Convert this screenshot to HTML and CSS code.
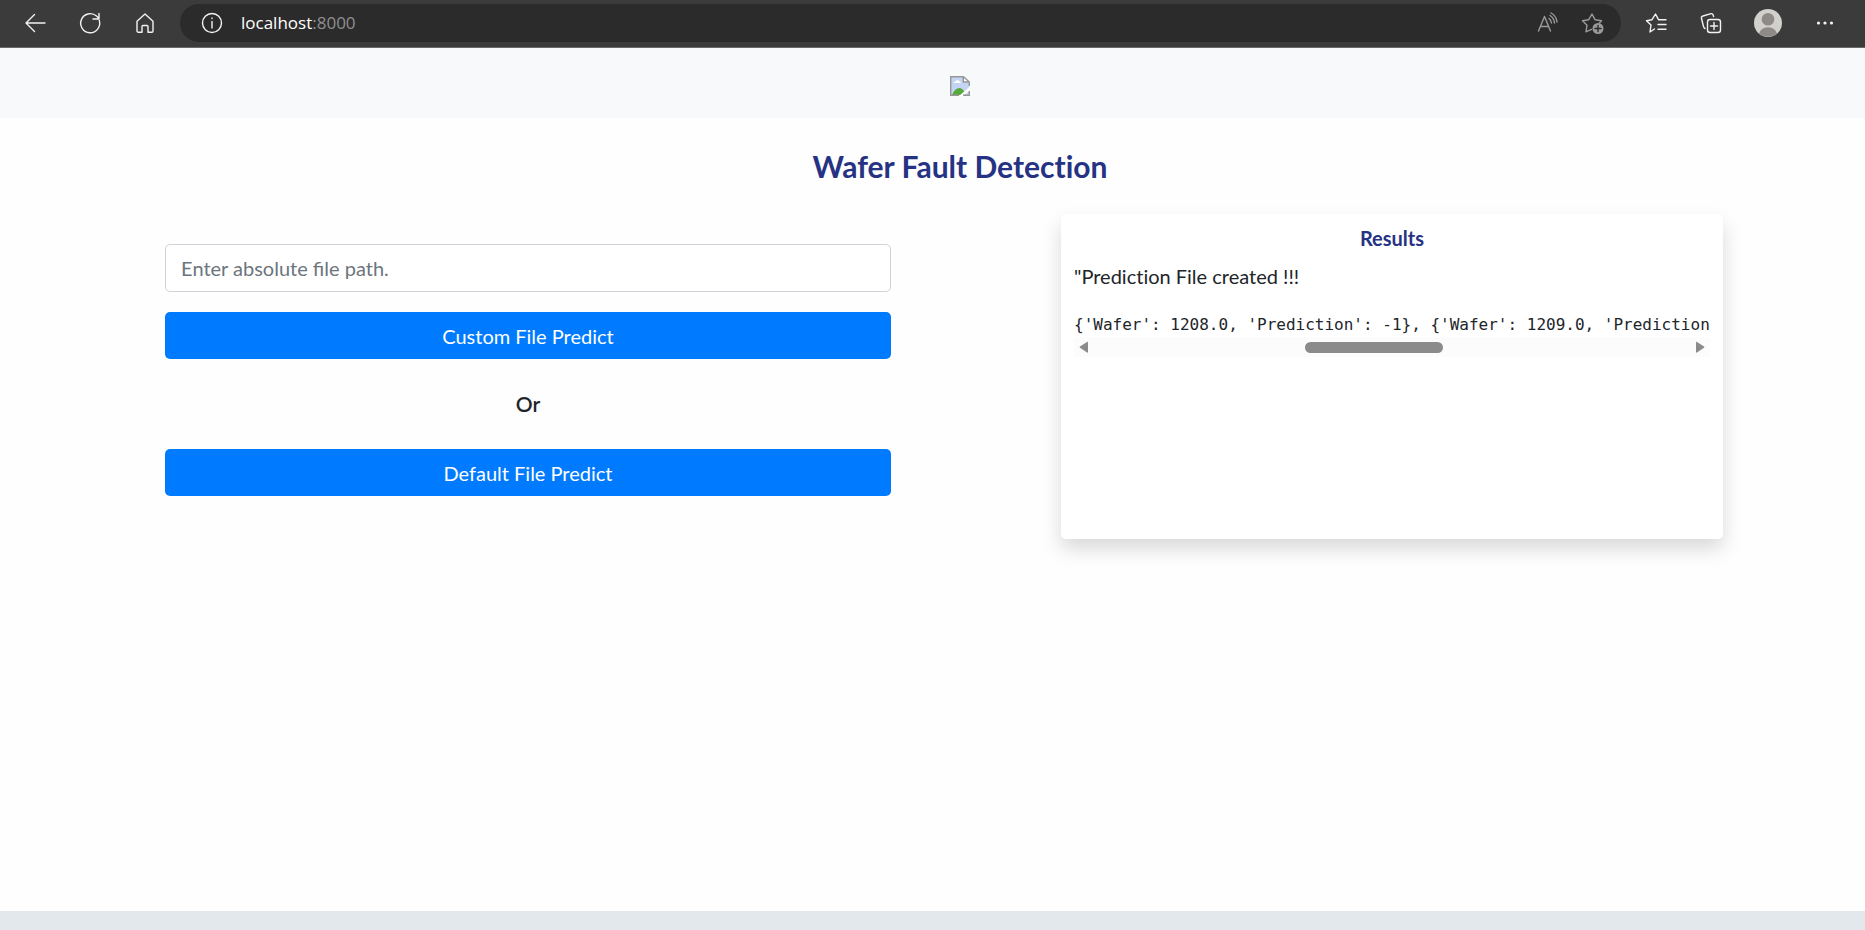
FILE: index.html
```html
<!DOCTYPE html>
<html lang="en">
<head>
<meta charset="utf-8">
<title>Wafer Fault Detection</title>
<link rel="stylesheet" href="styles.css">
</head>
<body>
<header class="browser">
  <button class="tool" aria-label="Back"><svg width="24" height="24" viewBox="0 0 24 24"><path d="M22 12H3M11.500 3.500L3 12l8.500 8.500"/></svg></button>
  <button class="tool" aria-label="Refresh"><svg width="24" height="24" viewBox="0 0 24 24"><path d="M21.300 9.500A9.500 9.500 0 1 1 18.500 5.100L21 7.500M21 2.500v5.500h-6"/></svg></button>
  <button class="tool" aria-label="Home"><svg width="24" height="24" viewBox="0 0 24 24"><path d="M4 10.200L12 3l8 7.200V20a1.200 1.200 0 0 1-1.200 1.200H15V15.500a1 1 0 0 0-1-1h-4a1 1 0 0 0-1 1v5.700H5.200A1.200 1.200 0 0 1 4 20z"/></svg></button>
  <div class="address">
    <svg width="24" height="24" viewBox="0 0 24 24"><circle cx="12" cy="12" r="9.500"/><path d="M12 10.500v6.500M12 7v.500"/></svg>
    <span class="url">localhost<span class="port">:8000</span></span>
    <button class="tool dim" aria-label="Read aloud"><svg width="24" height="24" viewBox="0 0 24 24"><path d="M2.500 20L8.500 5.500l6 14.500M4.700 15.500h7.800M13 7.500q2 1.500 2.500 4.500M14 4.500q4 2.500 4.500 7.500M15 2q5.500 3 6 9"/></svg></button>
    <button class="tool dim" aria-label="Add to favorites"><svg width="24" height="24" viewBox="0 0 24 24"><path d="M10.500 18.300l-5.500 2.500 1-6.600L1.500 9.700l6.200-1L11 3l3 5.700 6.500 1-2 2.300"/><circle class="disc" cx="17" cy="17.500" r="5.500"/><path class="cross" d="M17 14.500v6M14 17.500h6"/></svg></button>
  </div>
  <button class="tool" aria-label="Favorites"><svg width="24" height="24" viewBox="0 0 24 24"><path d="M10.500 18L6 21l1-7-4.500-4.300 5.500-1L11.500 3l3 5.700H22M14 13.500h8M14 18.300h8"/></svg></button>
  <button class="tool" aria-label="Collections"><svg width="24" height="24" viewBox="0 0 24 24"><rect x="8.500" y="8.500" width="13" height="13" rx="2.500"/><path d="M15 11.500v7M11.500 15h7M6 17.500q-1-.5-1.500-2L2.500 7.500Q2 5.500 4 5l8-2.300q1.500-.4 2 1l.6 1.800"/></svg></button>
  <button class="tool" aria-label="Profile"><svg class="avatar" width="28" height="28" viewBox="0 0 28 28"><circle cx="14" cy="14" r="14" fill="#d2d0cd"/><circle cx="14" cy="10.300" r="6.300" fill="#8e8a87"/><path d="M5 24.500a9.600 9.600 0 0 1 18 0a14 14 0 0 1-18 0z" fill="#8e8a87"/></svg></button>
  <button class="tool" aria-label="Settings and more"><svg class="dots" width="24" height="24" viewBox="0 0 24 24"><circle cx="5.500" cy="12" r="1.600"/><circle cx="12" cy="12" r="1.600"/><circle cx="18.500" cy="12" r="1.600"/></svg></button>
</header>
<nav class="navbar">
  <svg width="20" height="20" viewBox="0 0 20 20" role="img" aria-label="Logo">
    <path d="M1 1h12.500L19 6v13H1z" fill="#c3d4f4"/>
    <path d="M4 7q0-2 2-1.800Q7.500 3 9 5q2 .3 2 2z" fill="#fff"/>
    <path d="M2 19q3-7 7.500-7 4 0 6 7z" fill="#57aa3a"/>
    <path d="M9 20L20 10.500v4L13 20z" fill="#fff"/>
    <path d="M13.500.5L19.500 6h-6z" fill="#fff"/>
    <path d="M19.300 10V6L13.500.700H.700v18.600H9M13.300.700V6h6M13 19.300h6.300V15" fill="none" stroke="#979797" stroke-width="1.400"/>
  </svg>
</nav>
<main class="page">
  <h1 class="title">Wafer Fault Detection</h1>
  <div class="columns">
    <form class="predict">
      <input class="path" type="text" aria-label="File path" placeholder="Enter absolute file path.">
      <button class="btn" type="button">Custom File Predict</button>
      <p class="or">Or</p>
      <button class="btn" type="button">Default File Predict</button>
    </form>
    <section class="card">
      <h2 class="card-title">Results</h2>
      <p class="message">"Prediction File created !!!</p>
      <pre class="output">{'Wafer': 1208.0, 'Prediction': -1}, {'Wafer': 1209.0, 'Prediction</pre>
      <div class="scrollbar">
        <svg width="20" height="20" viewBox="0 0 20 20"><path d="M14 5.500v9.500q0 1-1 .500L6 10.800q-1-.6 0-1.200L13 5q1-.500 1 .500z"/></svg>
        <div class="track"><div class="thumb"></div></div>
        <svg width="20" height="20" viewBox="0 0 20 20"><path d="M6 5.500v9.500q0 1 1 .500l7-4.700q1-.6 0-1.200L7 5q-1-.500-1 .500z"/></svg>
      </div>
    </section>
  </div>
</main>
<footer class="footer"></footer>
</body>
</html>
```
FILE: styles.css
```css
* { box-sizing: border-box; }
body {
  margin: 0;
  min-height: 100vh;
  display: flex;
  flex-direction: column;
  background: #fefefe;
  color: #212529;
  font: 20px/30px Lato, sans-serif;
}
h1, h2, p, pre { margin: 0; }
button, input { font: inherit; }

.browser {
  display: flex;
  align-items: center;
  gap: 31px;
  height: 48px;
  padding: 0 28px 2px 23px;
  background: #3b3b3b;
  border-bottom: 1px solid #6b6a6a;
}
.tool {
  display: flex;
  padding: 0;
  border: 0;
  background: none;
}
.browser svg {
  flex: none;
  fill: none;
  stroke: #f2f2f2;
  stroke-width: 1.4;
  stroke-linejoin: round;
  stroke-linecap: round;
}
.browser .dim svg { stroke: #9a9a9a; }
.browser .avatar { stroke: none; }
.browser .dots { fill: #f2f2f2; stroke: none; }
.browser .disc { fill: #9a9a9a; stroke: none; }
.browser .cross { stroke: #2b2b2b; }
.address {
  flex: 1;
  display: flex;
  align-items: center;
  gap: 21px;
  height: 38px;
  margin: 0 -8px;
  padding: 0 16px 0 20px;
  border-radius: 19px;
  background: #2b2b2b;
}
.url {
  flex: 1;
  margin-left: -4px;
  color: #fff;
  font: 17px/24px "Open Sans", sans-serif;
}
.port { color: #8f8f8f; }

.navbar {
  display: flex;
  justify-content: center;
  padding: 28px 0 22px 55px;
  background: #f8f9fb;
}
.page {
  flex: 1;
  padding: 29px 41px 30px 96px;
}
.title {
  color: #263283;
  font-size: 30px;
  font-weight: 700;
  font-variant-ligatures: none;
  line-height: 38px;
  text-align: center;
}
.columns {
  display: grid;
  grid-template-columns: repeat(2, minmax(0, 1fr));
  align-items: start;
  margin-top: 29px;
}
.predict {
  display: flex;
  flex-direction: column;
  margin: 30px 8% 0;
}
.path {
  height: 48px;
  padding: 0 15px;
  border: 1px solid #ced4da;
  border-radius: 5px;
  background: #fff;
  color: #495057;
}
.path::placeholder { color: #6c757d; opacity: 1; }
.btn {
  height: 47px;
  padding: 0;
  border: 0;
  border-radius: 5px;
  background: #007bff;
  color: #fff;
}
.path + .btn { margin-top: 20px; }
.or {
  margin: 30px 0;
  font-size: 21px;
  font-weight: 600;
  text-align: center;
}
.card {
  min-height: 325px;
  margin: 0 101px;
  padding: 10px 13px;
  border-radius: 5px;
  background: #fff;
  box-shadow: 0 10px 20px rgba(0, 0, 0, .15);
}
.card-title {
  color: #263283;
  font-size: 20px;
  font-weight: 700;
  line-height: 28px;
  text-align: center;
}
.message {
  margin-top: 9px;
  font-variant-ligatures: none;
}
.output {
  margin-top: 22px;
  overflow: hidden;
  font: 16px/24px "DejaVu Sans Mono", monospace;
}
.scrollbar {
  display: flex;
  align-items: center;
  background: #fcfcfc;
  fill: #8b8b8b;
}
.track {
  flex: 1;
  padding-left: 211px;
}
.thumb {
  width: 138px;
  height: 11px;
  border-radius: 6px;
  background: #8b8b8b;
}
.footer {
  height: 19px;
  background: #e2e8eb;
}
```
